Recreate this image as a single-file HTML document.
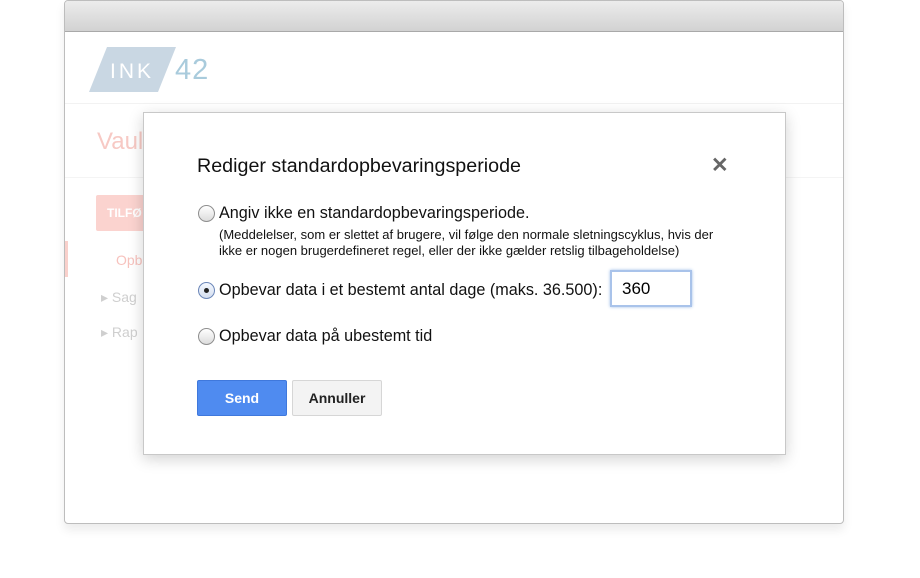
<!DOCTYPE html>
<html><head><style>
*{margin:0;padding:0;box-sizing:border-box}
body{width:920px;height:578px;background:#fff;font-family:"Liberation Sans",Arial,sans-serif;position:relative;overflow:hidden}
.win{position:absolute;left:64px;top:0;width:780px;height:524px;border:1px solid #bdbdbd;border-radius:4px;background:#fff;box-shadow:0 6px 10px rgba(0,0,0,0.08);overflow:hidden}
.tb{position:absolute;left:0;top:0;right:0;height:31px;background:linear-gradient(#ececec,#d2d2d2);border-bottom:1px solid #a9a9a9}
.abs{position:absolute}
.dlg{position:absolute;left:143px;top:112px;width:643px;height:343px;background:#fff;border:1px solid #c8c8c8;box-shadow:0 4px 14px rgba(0,0,0,0.18)}
.radio{position:absolute;width:17px;height:17px;border-radius:50%;border:1px solid #8e8e8e;background:linear-gradient(#fff,#dcdcdc)}
.t{position:absolute;color:#111;font-size:16px;white-space:nowrap}
</style></head><body>
<div class="win">
<div class="tb"></div>
<div class="abs" style="left:0;top:102px;width:780px;height:1px;background:#f2f2f2"></div>
<svg class="abs" style="left:24px;top:46px" width="90" height="45"><polygon points="18,0 87,0 69,45 0,45" fill="#c9d7e3"/><text x="21" y="31" fill="#fff" font-family="Liberation Sans" font-size="21" letter-spacing="3">INK</text></svg>
<div class="abs" style="left:110px;top:53px;font-size:29px;color:#a9cbdc;letter-spacing:1px">42</div>
<div class="abs" style="left:32px;top:127px;font-size:24px;color:#f7c9c4">Vaul</div>
<div class="abs" style="left:0;top:176px;width:780px;height:1px;background:#f4f4f4"></div>
<div class="abs" style="left:31px;top:194px;width:60px;height:36px;background:#fbd3cf;border-radius:2px;color:#fff;font-size:12px;font-weight:bold;padding:11px 0 0 11px">TILFØ</div>
<div class="abs" style="left:0;top:240px;width:3px;height:36px;background:#f9d0cb"></div>
<div class="abs" style="left:51px;top:251px;font-size:14px;color:#f7c2bd">Opb</div>
<div class="abs" style="left:36px;top:288px;font-size:14px;color:#cfcfcf">▸ Sag</div>
<div class="abs" style="left:36px;top:323px;font-size:14px;color:#cfcfcf">▸ Rap</div>
</div>
<div class="dlg">
<div class="t" style="left:53px;top:42px;font-size:19.7px">Rediger standardopbevaringsperiode</div>
<div class="t" style="left:567px;top:40px;font-size:21px;color:#666;font-weight:bold">✕</div>
<div class="radio" style="left:54px;top:92px"></div>
<div class="t" style="left:75px;top:91px;font-size:16.2px">Angiv ikke en standardopbevaringsperiode.</div>
<div class="t" style="left:75px;top:114px;font-size:13px">(Meddelelser, som er slettet af brugere, vil følge den normale sletningscyklus, hvis der</div>
<div class="t" style="left:75px;top:130px;font-size:13px">ikke er nogen brugerdefineret regel, eller der ikke gælder retslig tilbageholdelse)</div>
<div class="radio" style="left:54px;top:169px;border-color:#6b86b8;background:linear-gradient(#f4f8ff,#d4def0)"><div style="position:absolute;left:5px;top:5px;width:5px;height:5px;border-radius:50%;background:#222"></div></div>
<div class="t" style="left:75px;top:168px;font-size:16.2px">Opbevar data i et bestemt antal dage (maks. 36.500):</div>
<div class="abs" style="left:466px;top:157px;width:82px;height:37px;border:2px solid #a9c3ea;box-shadow:0 0 3px #9fbde8;font-size:17px;padding:7px 0 0 10px">360</div>
<div class="radio" style="left:54px;top:215px"></div>
<div class="t" style="left:75px;top:214px;font-size:16.2px">Opbevar data på ubestemt tid</div>
<div class="abs" style="left:53px;top:267px;width:90px;height:36px;background:#4f8bf0;border:1px solid #3f78dc;border-radius:2px;color:#fff;font-weight:bold;font-size:14px;text-align:center;line-height:34px">Send</div>
<div class="abs" style="left:148px;top:267px;width:90px;height:36px;background:#f3f3f3;border:1px solid #d6d6d6;border-radius:2px;color:#222;font-weight:bold;font-size:14px;text-align:center;line-height:34px">Annuller</div>
</div>
</body></html>
